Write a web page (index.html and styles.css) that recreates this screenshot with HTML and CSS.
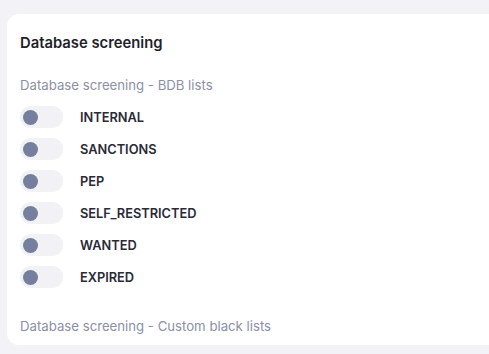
FILE: index.html
```html
<!DOCTYPE html>
<html lang="en">
<head>
    <meta charset="UTF-8">
    <meta name="viewport" content="width=device-width, initial-scale=1.0">
    <title>Database screening</title>
    <link rel="stylesheet" href="styles.css">
</head>
<body>
<section class="card">
    <h3 class="card-title">Database screening</h3>

    <p class="group-title">Database screening - BDB lists</p>
    <ul class="toggle-list">
        <li class="toggle-row"><span class="switch"><span class="knob"></span></span><span class="toggle-label">INTERNAL</span></li>
        <li class="toggle-row"><span class="switch"><span class="knob"></span></span><span class="toggle-label">SANCTIONS</span></li>
        <li class="toggle-row"><span class="switch"><span class="knob"></span></span><span class="toggle-label">PEP</span></li>
        <li class="toggle-row"><span class="switch"><span class="knob"></span></span><span class="toggle-label">SELF_RESTRICTED</span></li>
        <li class="toggle-row"><span class="switch"><span class="knob"></span></span><span class="toggle-label">WANTED</span></li>
        <li class="toggle-row"><span class="switch"><span class="knob"></span></span><span class="toggle-label">EXPIRED</span></li>
    </ul>

    <p class="group-title last">Database screening - Custom black lists</p>
</section>
</body>
</html>
```

FILE: styles.css
```css
body{
    margin: 0;
    padding: 14px 0 9px 7px;
    background-color: #f3f3f7;
    font-family: Inter, "Noto Sans", sans-serif;
    overflow: hidden;
}
.card{
    background-color: #ffffff;
    border-radius: 12px 0 0 12px;
    padding: 20px 13px 13px 13px;
    height: 298px;
    box-sizing: content-box;
}
.card-title{
    margin: 0;
    font-size: 14.8px;
    font-weight: 600;
    color: #1f1f2b;
    line-height: 18px;
}
.group-title{
    margin: 25px 0 0 0;
    font-size: 13.2px;
    color: #8b90a6;
    line-height: 16px;
}
.group-title.last{
    margin-top: 30px;
}
.toggle-list{
    list-style: none;
    margin: 13px 0 0 0;
    padding: 0;
    display: flex;
    flex-direction: column;
    gap: 10px;
}
.toggle-row{
    display: flex;
    align-items: center;
    gap: 17px;
}
.switch{
    width: 43px;
    height: 22px;
    border-radius: 11px;
    background-color: #f1f1f6;
    display: flex;
    align-items: center;
    padding-left: 3px;
    box-sizing: border-box;
}
.knob{
    width: 15px;
    height: 15px;
    border-radius: 50%;
    background-color: #74809c;
}
.toggle-label{
    font-size: 12.8px;
    font-weight: 600;
    color: #2a2a38;
}
```
